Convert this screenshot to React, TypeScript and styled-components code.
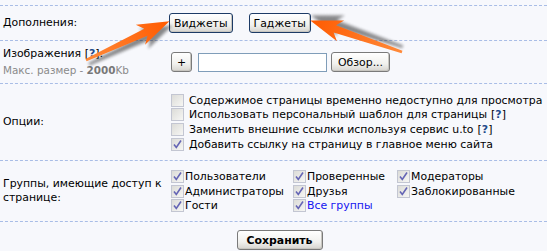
import styled, { createGlobalStyle } from "styled-components";

const GlobalStyle = createGlobalStyle`
  html, body {
    margin: 0;
    padding: 0;
    background: #f7f8fc;
  }
  body {
    font-family: "DejaVu Sans", "Liberation Sans", sans-serif;
    font-size: 10.9px;
    color: #000;
  }
`;

const Page = styled.div`
  position: relative;
  width: 547px;
  height: 251px;
  background: #f7f8fc;
  padding-top: 5px;
  box-sizing: border-box;
  overflow: hidden;
`;

const Form = styled.div`
  border-top: 1px dashed #a9bde6;
`;

const Row = styled.div<{ $pad: number }>`
  display: grid;
  grid-template-columns: 171px 1fr;
  align-items: center;
  padding: ${p => p.$pad}px 0;
  border-bottom: 1px dashed #a9bde6;
`;

const Label = styled.div`
  padding-left: 3px;
  line-height: 14px;
  white-space: nowrap;
`;

const Hint = styled.div`
  color: #8a8a8a;
  font-size: 10.4px;
  margin-top: 2px;
  b {
    color: #777;
  }
`;

const Field = styled.div<{ $gap?: number }>`
  display: flex;
  align-items: center;
  gap: ${p => p.$gap ?? 6}px;
`;

const Button = styled.button<{ $dark?: boolean; $bold?: boolean }>`
  font-family: inherit;
  font-size: 10.9px;
  font-weight: ${p => (p.$bold ? "bold" : "normal")};
  color: #000;
  height: 20px;
  padding: 0 4px;
  border: 1px solid ${p => (p.$dark ? "#1d3b66" : "#7a7a7a")};
  border-radius: 3px;
  background: linear-gradient(#ffffff, #f1f1ee 60%, #d6d4cf);
  box-shadow: inset -1px -1px 0 #c8c6c0;
`;

const TextInput = styled.input`
  width: 129px;
  height: 19px;
  box-sizing: border-box;
  border: 1px solid #7f9db9;
  background: #fff;
  padding: 0 3px;
`;

const List = styled.div`
  display: flex;
  flex-direction: column;
`;

const Option = styled.label<{ $gap: number }>`
  display: flex;
  align-items: center;
  gap: ${p => p.$gap}px;
  height: 14.6px;
  white-space: nowrap;
`;

const Box = styled.span<{ $checked: boolean }>`
  flex: none;
  width: 11px;
  height: 11px;
  border: 1px solid #c3c6d2;
  background: linear-gradient(135deg, #dcdcd8, #f6f6f4);
  display: flex;
  align-items: center;
  justify-content: center;
  svg {
    display: ${p => (p.$checked ? "block" : "none")};
  }
`;

const Help = styled.span`
  margin-left: 4px;
  b {
    color: #1f4a8a;
  }
`;

const Groups = styled.div`
  display: grid;
  grid-template-columns: 122px 104px 1fr;
`;

const Link = styled.span`
  color: #1515f0;
`;

const Footer = styled.div`
  display: flex;
  justify-content: center;
  padding: 8px 0 0 12px;
`;

const Arrows = styled.svg`
  position: absolute;
  left: 0;
  top: 0;
  pointer-events: none;
`;

const CheckBox = ({ checked }: { checked: boolean }) => (
  <Box $checked={checked}>
    <svg width="9" height="9" viewBox="0 0 9 9">
      <path d="M1 4.5 L3.3 7.5 L8 0.5" fill="none" stroke="#6565b5" strokeWidth="1.6" />
    </svg>
  </Box>
);

const options: [string, boolean, boolean][] = [
  ["Содержимое страницы временно недоступно для просмотра", false, false],
  ["Использовать персональный шаблон для страницы", false, true],
  ["Заменить внешние ссылки используя сервис u.to", false, true],
  ["Добавить ссылку на страницу в главное меню сайта", true, false],
];

const groupCols: [string, boolean?][][] = [
  [["Пользователи"], ["Администраторы"], ["Гости"]],
  [["Проверенные"], ["Друзья"], ["Все группы", true]],
  [["Модераторы"], ["Заблокированные"]],
];

const arrowShape = (len: number) =>
  `0,-1.2 ${len - 26},-3.8 ${len - 32},-11 ${len},0 ${len - 32},11 ${len - 26},3.8 0,1.4`;

const Arrow = ({ x, y, angle, len }: { x: number; y: number; angle: number; len: number }) => (
  <g transform={`translate(${x} ${y}) rotate(${angle})`}>
    <polygon points={arrowShape(len)} fill="#000" opacity="0.45" transform="translate(1 5)" filter="url(#blur)" />
    <polygon points={arrowShape(len)} fill="url(#orange)" />
  </g>
);

const App = () => (
  <>
    <GlobalStyle />
    <Page>
      <Form>
        <Row $pad={7}>
          <Label>Дополнения:</Label>
          <Field $gap={16}>
            <Button $dark style={{ marginLeft: -2 }}>Виджеты</Button>
            <Button $dark>Гаджеты</Button>
          </Field>
        </Row>
        <Row $pad={6}>
          <Label>
            Изображения [<b style={{ color: "#1f4a8a" }}>?</b>]:
            <Hint>
              Макс. размер - <b>2000</b>Kb
            </Hint>
          </Label>
          <Field>
            <Button style={{ width: 21 }}>+</Button>
            <TextInput />
            <Button style={{ marginLeft: -2, padding: "0 6px" }}>Обзор...</Button>
          </Field>
        </Row>
        <Row $pad={9}>
          <Label>Опции:</Label>
          <List>
            {options.map(([text, checked, help]) => (
              <Option key={text} $gap={5}>
                <CheckBox checked={checked} />
                <span>
                  {text}
                  {help && (
                    <Help>
                      [<b>?</b>]
                    </Help>
                  )}
                </span>
              </Option>
            ))}
          </List>
        </Row>
        <Row $pad={8}>
          <Label>
            Группы, имеющие доступ к
            <br />
            странице:
          </Label>
          <Groups>
            {groupCols.map((col, i) => (
              <List key={i}>
                {col.map(([name, link]) => (
                  <Option key={name} $gap={1}>
                    <CheckBox checked />
                    {link ? <Link>{name}</Link> : <span>{name}</span>}
                  </Option>
                ))}
              </List>
            ))}
          </Groups>
        </Row>
      </Form>
      <Footer>
        <Button $bold style={{ padding: "0 9px" }}>Сохранить</Button>
      </Footer>
      <Arrows width="547" height="251" viewBox="0 0 547 251">
        <defs>
          <linearGradient id="orange" x1="0" y1="0" x2="1" y2="0">
            <stop offset="0" stopColor="#ff8a3a" />
            <stop offset="1" stopColor="#ff5a00" />
          </linearGradient>
          <filter id="blur" x="-20%" y="-50%" width="140%" height="200%">
            <feGaussianBlur stdDeviation="1.6" />
          </filter>
        </defs>
        <Arrow x={86} y={60} angle={-24.9} len={92} />
        <Arrow x={402} y={52} angle={-161} len={97} />
      </Arrows>
    </Page>
  </>
);

export default App;
